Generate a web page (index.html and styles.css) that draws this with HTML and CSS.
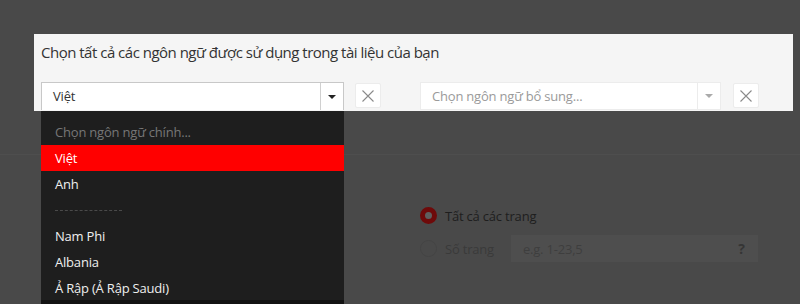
FILE: index.html
```html
<!DOCTYPE html>
<html lang="vi">
<head>
<meta charset="utf-8">
<title>Chọn ngôn ngữ</title>
<link rel="stylesheet" href="styles.css">
</head>
<body>
<div class="page">
  <div class="under">
    <div class="under-head"></div>
    <div class="pages">
      <div class="opt">
        <span class="radio radio-on"></span>
        <span class="opt-label">Tất cả các trang</span>
      </div>
      <div class="opt">
        <span class="radio"></span>
        <span class="opt-label opt-off">Số trang</span>
        <div class="range">
          <span class="range-ph">e.g. 1-23,5</span>
          <span class="range-help">?</span>
        </div>
      </div>
    </div>
  </div>

  <div class="modal">
    <div class="modal-title">Chọn tất cả các ngôn ngữ được sử dụng trong tài liệu của bạn</div>
    <div class="controls">
      <div class="select select-open">
        <span class="select-value">Việt</span>
        <span class="select-arrow"><span class="tri"></span></span>
      </div>
      <button class="clear" type="button">
        <svg width="12" height="12" viewBox="0 0 12 12"><path d="M0.5 0.5L11.5 11.5M11.5 0.5L0.5 11.5" stroke="#8a8a8a" stroke-width="1.1" fill="none"/></svg>
      </button>
      <div class="select select-secondary">
        <span class="select-value ph">Chọn ngôn ngữ bổ sung...</span>
        <span class="select-arrow"><span class="tri tri-light"></span></span>
      </div>
      <button class="clear" type="button">
        <svg width="12" height="12" viewBox="0 0 12 12"><path d="M0.5 0.5L11.5 11.5M11.5 0.5L0.5 11.5" stroke="#8a8a8a" stroke-width="1.1" fill="none"/></svg>
      </button>
    </div>
  </div>

  <ul class="dropdown">
    <li class="item item-ph">Chọn ngôn ngữ chính...</li>
    <li class="item item-active">Việt</li>
    <li class="item">Anh</li>
    <li class="item item-sep"><span class="dash"></span></li>
    <li class="item">Nam Phi</li>
    <li class="item">Albania</li>
    <li class="item">Ả Rập (Ả Rập Saudi)</li>
  </ul>
</div>
</body>
</html>
```

FILE: styles.css
```css
* { box-sizing: border-box; }
html, body {
  margin: 0;
  padding: 0;
}
body {
  width: 800px;
  height: 304px;
  overflow: hidden;
  background: #494949;
  font-family: "Open Sans", "Noto Sans", "DejaVu Sans", sans-serif;
}
.page {
  position: relative;
  width: 800px;
  height: 304px;
}

/* underlying (dimmed) page */
.under-head {
  height: 155px;
  border-bottom: 1px solid #4e4e4e;
}
.pages {
  padding: 47px 40px 0 420px;
  display: flex;
  flex-direction: column;
  gap: 6px;
}
.opt {
  display: flex;
  align-items: center;
  height: 27px;
}
.radio {
  width: 17px;
  height: 17px;
  border-radius: 50%;
  border: 1px solid #444;
  flex: none;
}
.radio-on {
  border: 5px solid #6e0a0a;
  background: #5e5e5e;
}
.opt-label {
  margin-left: 8px;
  font-size: 13px;
  letter-spacing: -0.2px;
  color: #1e1e1e;
}
.opt-off { color: #3a3a3a; }
.range {
  margin-left: 17px;
  width: 247px;
  height: 27px;
  background: #4e4e4e;
  display: flex;
  align-items: center;
  justify-content: space-between;
  padding: 0 13px 0 12px;
}
.range-ph { font-size: 13px; letter-spacing: -0.2px; color: #3e3e3e; }
.range-help { font-size: 14px; font-weight: 700; color: #353535; }

/* modal panel */
.modal {
  position: absolute;
  left: 34px;
  top: 34px;
  width: 759px;
  height: 77px;
  background: #f5f5f5;
  padding: 8px 0 0 7px;
}
.modal-title {
  font-size: 15px;
  letter-spacing: -0.5px;
  line-height: 20px;
  color: #333;
}
.controls {
  margin-top: 20px;
  display: flex;
  align-items: flex-start;
}
.select {
  height: 28px;
  background: #fff;
  display: flex;
  align-items: stretch;
}
.select-open {
  width: 303px;
  border: 1px solid #c8c8c8;
  border-bottom: none;
}
.select-secondary {
  width: 301px;
  margin-left: 39px;
  border: 1px solid #ececec;
}
.select-value {
  flex: 1;
  font-size: 13px;
  letter-spacing: -0.2px;
  color: #333;
  line-height: 26px;
  padding-left: 11px;
}
.select-value.ph { color: #9a9a9a; }
.select-arrow {
  width: 23px;
  border-left: 1px solid #d0d0d0;
  display: flex;
  align-items: center;
  justify-content: center;
}
.select-secondary .select-arrow { border-left-color: #ececec; }
.tri {
  width: 0;
  height: 0;
  border-left: 4px solid transparent;
  border-right: 4px solid transparent;
  border-top: 4px solid #222;
}
.tri-light { border-top-color: #aaa; }
.clear {
  margin: 1px 0 0 11px;
  width: 26px;
  height: 25px;
  padding: 0;
  background: #fff;
  border: 1px solid #ececec;
  border-radius: 2px;
  display: flex;
  align-items: center;
  justify-content: center;
}
.select-secondary + .clear { margin-left: 12px; }

/* open dropdown list */
.dropdown {
  position: absolute;
  left: 41px;
  top: 111px;
  width: 303px;
  height: 200px;
  margin: 0;
  padding: 8px 0 0;
  list-style: none;
  background: #1e1e1e;
  border-bottom: 11px solid #121212;
}
.item {
  height: 26px;
  line-height: 26px;
  padding-left: 14px;
  font-size: 13px;
  letter-spacing: -0.2px;
  color: #efefef;
}
.item-ph { color: #777; }
.item-active { background: #ff0000; color: #fff; }
.item-sep {
  display: flex;
  align-items: center;
}
.dash {
  display: block;
  width: 67px;
  border-top: 1px dashed #4a4a4a;
}
```
